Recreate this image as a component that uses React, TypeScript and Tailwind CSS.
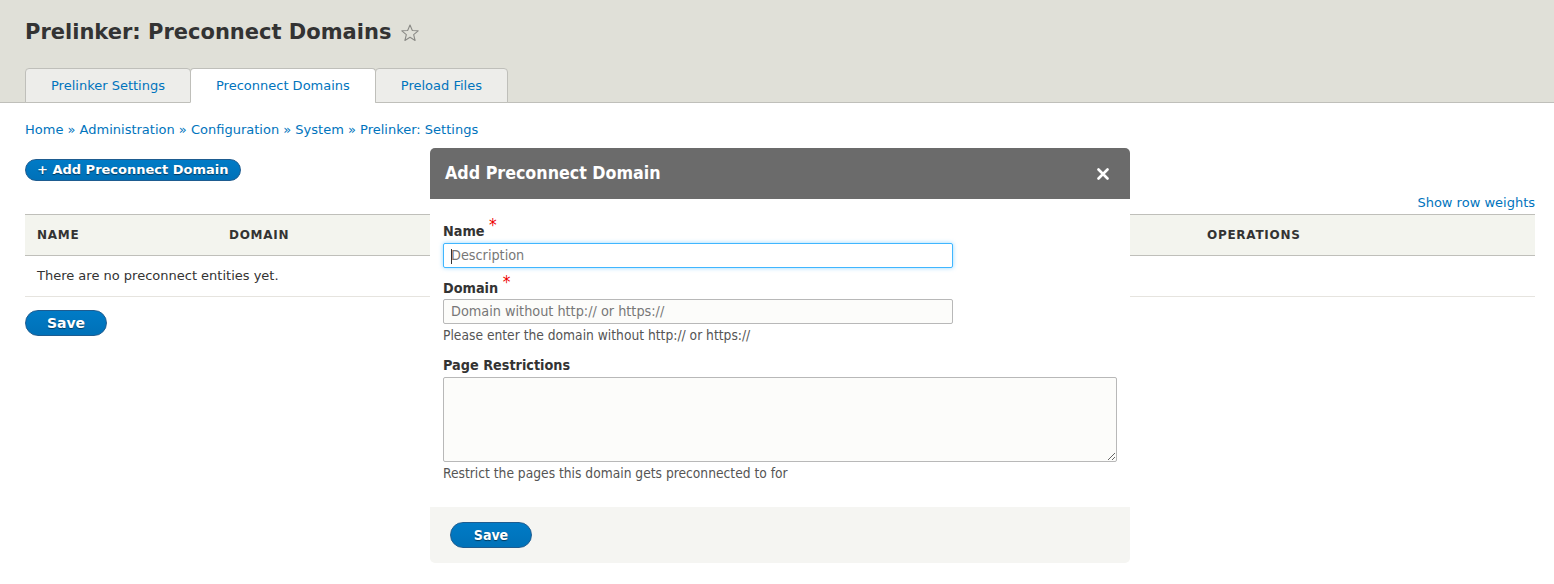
import React from "react";

const btn =
  "rounded-full border border-[#1e5c90] bg-gradient-to-b from-[#007bc6] to-[#0071b8] text-white font-bold [text-shadow:0_1px_1px_rgba(0,0,0,0.5)]";

function Star() {
  return (
    <svg width="20" height="20" viewBox="0 0 24 24" className="ml-[9px] mt-[1px]">
      <polygon
        points="12,2.5 14.8,9 21.8,9.4 16.4,14 18.1,21 12,17.2 5.9,21 7.6,14 2.2,9.4 9.2,9"
        fill="none"
        stroke="#8a8a86"
        strokeWidth="1.3"
        strokeLinejoin="round"
      />
    </svg>
  );
}

export default function App() {
  const tabs = ["Prelinker Settings", "Preconnect Domains", "Preload Files"];
  return (
    <div className="relative min-h-[584px] bg-white font-['DejaVu_Sans',sans-serif] text-[#333]">
      {/* Header */}
      <div className="bg-[#e0e0d8] border-b border-[#bfbfba] px-[25px] pt-[18px]">
        <div className="flex items-center">
          <h1 className="text-[21px] leading-[28px] font-bold text-[#333]">
            Prelinker: Preconnect Domains
          </h1>
          <Star />
        </div>
        <div className="mt-[22px] flex">
          {tabs.map((t, i) => (
            <div
              key={t}
              className={
                "h-[35px] -mb-px flex items-center px-[25px] text-[13px] text-[#0074bd] border border-[#bfbfba] rounded-t-[4px] " +
                (i === 1 ? "bg-white border-b-white" : "bg-[#ededea]") +
                (i > 0 ? " -ml-px" : "")
              }
            >
              {t}
            </div>
          ))}
        </div>
      </div>

      {/* Content */}
      <div className="px-[25px] pr-[19px]">
        <div className="mt-[17px] text-[13px] leading-[20px] text-[#0074bd]">
          Home » Administration » Configuration » System » Prelinker: Settings
        </div>
        <div className="mt-[19px] flex">
          <button className={btn + " h-[22px] px-[11px] text-[13px] leading-[20px]"}>
            + Add Preconnect Domain
          </button>
        </div>
        <div className="mt-[12px] flex justify-end text-[13px] leading-[20px] text-[#0074bd]">
          Show row weights
        </div>
        <div className="mt-px">
          <div className="grid grid-cols-[192px_1fr_340px] h-[42px] items-center bg-[#f3f4ee] border-y border-[#bfbfba] text-[12px] font-bold uppercase text-[#333] tracking-[0.06em]">
            <div className="px-[12px]">Name</div>
            <div className="px-[12px]">Domain</div>
            <div className="px-[12px]">Operations</div>
          </div>
          <div className="h-[41px] flex items-center border-b border-[#e6e4df] px-[12px] text-[13px] text-[#333]">
            There are no preconnect entities yet.
          </div>
        </div>
        <div className="mt-[13px] flex">
          <button className={btn + " h-[26px] w-[82px] text-[14px] leading-[24px]"}>Save</button>
        </div>
      </div>

      {/* Dialog */}
      <div className="absolute left-[430px] top-[148px] w-[700px] rounded-[5px] bg-white font-['DejaVu_Sans_Condensed','DejaVu_Sans',sans-serif] font-stretch-condensed">
        <div className="h-[51px] rounded-t-[5px] bg-[#6b6b6b] flex items-center justify-between pl-[15px] pr-[21px]">
          <div className="text-[17.7px] font-bold text-white">Add Preconnect Domain</div>
          <svg width="12" height="12" viewBox="0 0 12 12">
            <path d="M1.5 1.5 L10.5 10.5 M10.5 1.5 L1.5 10.5" stroke="white" strokeWidth="2.6" strokeLinecap="round" />
          </svg>
        </div>
        <div className="px-[13px] pt-[22px] pb-[26px] text-[14.3px]">
          <div className="h-[18px] leading-[18px] font-bold text-[#333]">
            Name <span className="text-[#e00] text-[17px] relative -top-[5px] font-normal">*</span>
          </div>
          <div className="relative mt-[4px] w-[510px] h-[25px] rounded-[2px] border border-[#40b6ff] bg-white shadow-[0_0_4px_rgba(64,182,255,0.55)] flex items-center px-[7px] text-[#777]">
            <span className="absolute left-[7px] top-[5px] h-[15px] w-px bg-[#333]" />
            Description
          </div>

          <div className="mt-[10px] h-[18px] leading-[18px] font-bold text-[#333]">
            Domain <span className="text-[#e00] text-[17px] relative -top-[5px] font-normal">*</span>
          </div>
          <div className="mt-[3px] w-[510px] h-[25px] rounded-[2px] border border-[#b8b8b8] bg-[#fcfcfa] flex items-center px-[7px] text-[#777]">
            Domain without http:// or https://
          </div>
          <div className="mt-[3px] h-[16px] leading-[16px] text-[13.7px] text-[#555]">
            Please enter the domain without http:// or https://
          </div>

          <div className="mt-[13px] h-[18px] leading-[18px] font-bold text-[#333]">Page Restrictions</div>
          <textarea
            readOnly
            className="mt-[3px] block w-[674px] h-[85px] rounded-[2px] border border-[#b8b8b8] bg-[#fcfcfa] resize-y outline-none"
          />
          <div className="mt-[3px] h-[16px] leading-[16px] text-[13.7px] text-[#555]">
            Restrict the pages this domain gets preconnected to for
          </div>
        </div>
        <div className="h-[56px] rounded-b-[5px] bg-[#f5f5f2] flex items-center pl-[20px]">
          <button className={btn + " h-[26px] w-[82px] text-[14px] leading-[24px]"}>Save</button>
        </div>
      </div>
    </div>
  );
}
